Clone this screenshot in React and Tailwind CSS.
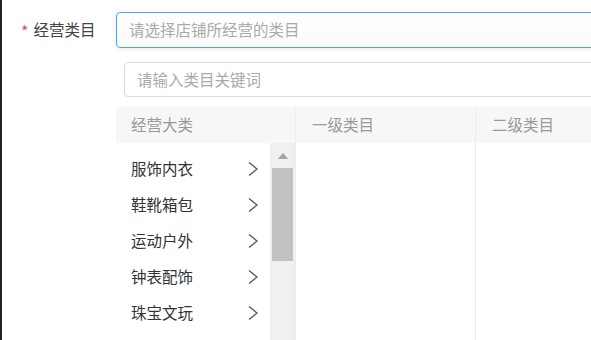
import React from "react";

const FONT = { fontFamily: '"Noto Sans CJK SC", "Noto Sans", sans-serif' };

const majors = ["服饰内衣", "鞋靴箱包", "运动户外", "钟表配饰", "珠宝文玩"];

function Chevron() {
  return (
    <svg width="10" height="16" viewBox="0 0 10 16" aria-hidden="true">
      <polyline points="1,1.5 9,8 1,14.5" fill="none" stroke="#555" strokeWidth="1.3" />
    </svg>
  );
}

export default function App() {
  return (
    <div
      className="flex h-[340px] w-[591px] overflow-hidden bg-white text-[15.5px]"
      style={FONT}
    >
      <div className="w-[2px] shrink-0 bg-[#222]" />

      {/* label */}
      <div className="flex w-[114px] shrink-0 items-start pt-[18px] pl-[19px]">
        <span className="mr-[5px] mt-[3px] text-[16px] leading-[20px] text-[#f0504f]">*</span>
        <span className="leading-[22px] text-[#444]">经营类目</span>
      </div>

      {/* field */}
      <div className="w-[520px] shrink-0 pt-[12px]">
        <div className="flex h-[36px] items-center rounded-[4px] border border-[#4ba3fb] bg-gradient-to-b from-white to-[#fafafa] pl-[12px] text-[#aaa] shadow-[0_1px_4px_2px_rgba(0,0,0,0.05)]">
          请选择店铺所经营的类目
        </div>

        <div className="mt-[4px] bg-white">
          <div className="pt-[10px] pl-[8px]">
            <div className="flex h-[35px] items-center rounded-[4px] border border-[#dcdcdc] pl-[12px] text-[#aaa]">
              请输入类目关键词
            </div>
          </div>

          <div className="mt-[10px] flex">
            {/* 经营大类 */}
            <div className="w-[179px] shrink-0">
              <div className="flex h-[36px] items-center bg-[#f7f7f7] pl-[15px] text-[#999]">
                经营大类
              </div>
              <div className="flex h-[200px]">
                <ul className="flex-1 pt-[8px]">
                  {majors.map((name) => (
                    <li
                      key={name}
                      className="flex h-[36px] items-center justify-between pl-[15px] pr-[12px] text-[#333]"
                    >
                      <span>{name}</span>
                      <Chevron />
                    </li>
                  ))}
                </ul>
                <div className="flex w-[25px] flex-col items-center bg-[#f0f0f0] pt-[10px]">
                  <div className="h-0 w-0 border-x-[5.5px] border-b-[6px] border-x-transparent border-b-[#a3a3a3]" />
                  <div className="mt-[9px] h-[93px] w-[21px] bg-[#c1c1c1]" />
                </div>
              </div>
            </div>

            {/* 一级类目 */}
            <div className="w-[180px] shrink-0 border-l border-[#ececec]">
              <div className="flex h-[36px] items-center bg-[#f7f7f7] pl-[16px] text-[#999]">
                一级类目
              </div>
              <div className="h-[200px]" />
            </div>

            {/* 二级类目 */}
            <div className="flex-1 border-l border-[#ececec]">
              <div className="flex h-[36px] items-center bg-[#f7f7f7] pl-[16px] text-[#999]">
                二级类目
              </div>
              <div className="h-[200px]" />
            </div>
          </div>
        </div>
      </div>
    </div>
  );
}
